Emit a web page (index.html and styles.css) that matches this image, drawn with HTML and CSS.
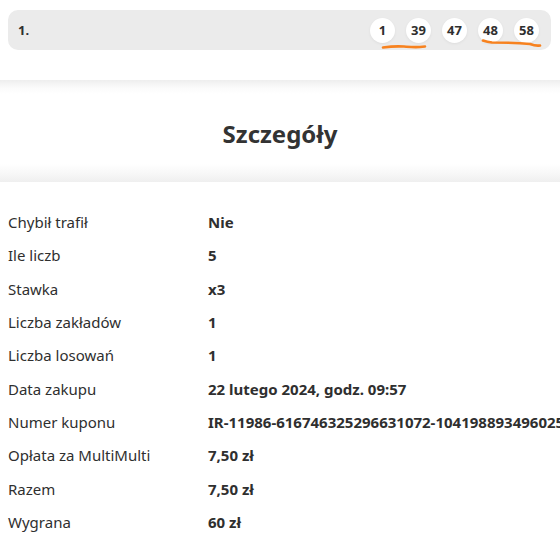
FILE: index.html
```html
<!DOCTYPE html>
<html lang="pl">
<head>
<meta charset="utf-8">
<link rel="stylesheet" href="styles.css">
</head>
<body>
<div class="top">
  <div class="bar">
    <span class="idx">1.</span>
    <div class="balls">
      <span class="ball">1</span>
      <span class="ball">39</span>
      <span class="ball">47</span>
      <span class="ball">48</span>
      <span class="ball">58</span>
    </div>
    <svg class="marks" width="200" height="40" viewBox="0 0 200 40">
      <path d="M23 27.5 C 30 26.5, 36 26, 44 26.5 C 50 27, 54 27.5, 60 27 L 65 26.5" stroke="#f7821f" stroke-width="2.6" fill="none" stroke-linecap="round"/>
      <path d="M123 20.5 C 126 21.5, 128 22, 132 22.5 C 145 22.5, 160 23, 170 24 C 174 25.5, 177 26, 180 25.5" stroke="#f7821f" stroke-width="2.6" fill="none" stroke-linecap="round"/>
    </svg>
  </div>
</div>
<div class="heading">
  <h1>Szczegóły</h1>
</div>
<div class="details">
  <div class="row"><span class="k">Chybił trafił</span><span class="v">Nie</span></div>
  <div class="row"><span class="k">Ile liczb</span><span class="v">5</span></div>
  <div class="row"><span class="k">Stawka</span><span class="v">x3</span></div>
  <div class="row"><span class="k">Liczba zakładów</span><span class="v">1</span></div>
  <div class="row"><span class="k">Liczba losowań</span><span class="v">1</span></div>
  <div class="row"><span class="k">Data zakupu</span><span class="v">22 lutego 2024, godz. 09:57</span></div>
  <div class="row"><span class="k">Numer kuponu</span><span class="v">IR-11986-616746325296631072-104198893496025</span></div>
  <div class="row"><span class="k">Opłata za MultiMulti</span><span class="v">7,50 zł</span></div>
  <div class="row"><span class="k">Razem</span><span class="v">7,50 zł</span></div>
  <div class="row"><span class="k">Wygrana</span><span class="v">60 zł</span></div>
</div>
</body>
</html>
```
FILE: styles.css
```css
html, body {
  margin: 0;
  padding: 0;
  background: #fff;
  overflow: hidden;
}
body {
  font-family: "Noto Sans", "Open Sans", sans-serif;
  color: #2f2f2f;
  width: 560px;
}
.top {
  padding: 10px 9px 30px 8px;
}
.bar {
  position: relative;
  height: 40px;
  background: #ebebeb;
  border-radius: 10px;
  display: flex;
  align-items: center;
  justify-content: space-between;
  padding: 0 12px 0 10px;
}
.idx {
  font-weight: 700;
  font-size: 13px;
}
.balls {
  display: flex;
  gap: 11px;
}
.ball {
  width: 25px;
  height: 25px;
  border-radius: 50%;
  background: #fff;
  display: flex;
  align-items: center;
  justify-content: center;
  font-weight: 700;
  font-size: 13px;
  box-shadow: 0 1px 3px rgba(0,0,0,0.06);
}
.marks {
  position: absolute;
  left: 352px;
  top: 10px;
  overflow: visible;
}
.heading {
  height: 102px;
  display: flex;
  align-items: center;
  justify-content: center;
  background: linear-gradient(#eeeeee 0px, #fbfbfb 8px, #ffffff 14px, #ffffff 84px, #f7f7f7 94px, #efefef 102px);
}
h1 {
  margin: 0;
  font-size: 24px;
  font-weight: 700;
  color: #333;
  padding-top: 4px;
}
.details {
  padding: 24px 0 0 8px;
}
.row {
  display: flex;
  line-height: 33.33px;
  font-size: 15px;
  white-space: nowrap;
}
.k {
  width: 200px;
  flex: none;
}
.v {
  font-weight: 700;
}
```
